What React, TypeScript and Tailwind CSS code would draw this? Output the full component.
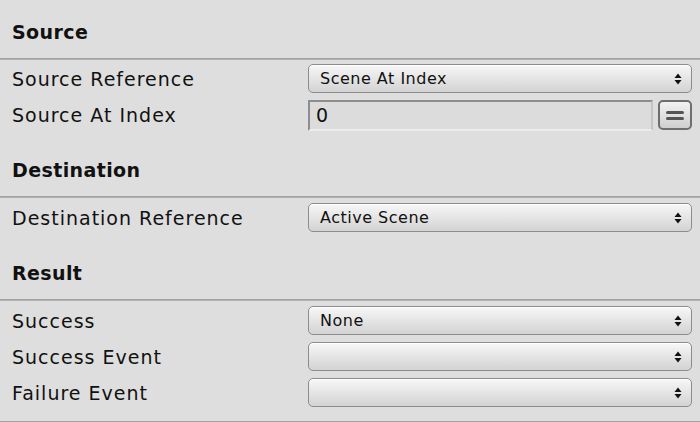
import React from "react";

const FONT = { fontFamily: '"Lucida Grande", "DejaVu Sans", sans-serif' };

function Arrows() {
  return (
    <svg width="8" height="12" viewBox="0 0 8 12" className="shrink-0">
      <path d="M4 0.5 L7.5 5 L0.5 5 Z" fill="#111" />
      <path d="M4 11.5 L7.5 7 L0.5 7 Z" fill="#111" />
    </svg>
  );
}

function Dropdown({ value }: { value?: string }) {
  return (
    <div className="flex h-[29px] flex-1 items-center justify-between rounded-[5px] border border-[#8c8c8c] bg-gradient-to-b from-[#f7f7f7] to-[#d3d3d3] pl-[11px] pr-[9px] text-[16px] tracking-[0.5px] text-[#111] shadow-[inset_0_1px_0_#ffffff]">
      <span>{value}</span>
      <Arrows />
    </div>
  );
}

function Header({ title }: { title: string }) {
  return (
    <>
      <div className="flex h-[58px] items-center px-[12px] pt-[6px] text-[19px] font-bold tracking-[0.4px] text-[#111]">
        {title}
      </div>
      <div className="h-[2px] bg-[#b0b0b0] border-t border-[#a2a2a2]" />
    </>
  );
}

function Row({ label, children }: { label: string; children: React.ReactNode }) {
  return (
    <div className="flex h-[36px] items-start">
      <div className="flex h-[30px] w-[308px] shrink-0 items-center pl-[12px] text-[19px] tracking-[1px] text-[#111]">
        {label}
      </div>
      <div className="flex flex-1 gap-[5px] pr-[8px]">{children}</div>
    </div>
  );
}

export default function App() {
  return (
    <div className="h-[422px] w-[700px] overflow-hidden bg-[#dedede]" style={FONT}>
      <Header title="Source" />
      <div className="pt-[4px] pb-[2px]">
        <Row label="Source Reference">
          <Dropdown value="Scene At Index" />
        </Row>
        <Row label="Source At Index">
          <div className="flex h-[31px] flex-1 items-center border-2 border-[#8e8e8e] border-b-[#ececec] border-r-[#c4c4c4] bg-[#dcdcdc] pl-[6px] text-[19px] text-[#111]">
            0
          </div>
          <div className="flex h-[30px] w-[34px] flex-col items-center justify-center gap-[3px] rounded-[5px] border-2 border-[#6e6e6e] bg-gradient-to-b from-[#f2f2f2] to-[#cfcfcf]">
            <div className="h-[3px] w-[18px] rounded-full bg-[#555]" />
            <div className="h-[3px] w-[18px] rounded-full bg-[#555]" />
          </div>
        </Row>
      </div>
      <Header title="Destination" />
      <div className="pt-[5px] pb-[2px]">
        <Row label="Destination Reference">
          <Dropdown value="Active Scene" />
        </Row>
      </div>
      <Header title="Result" />
      <div className="pt-[5px] pb-[2px]">
        <Row label="Success">
          <Dropdown value="None" />
        </Row>
        <Row label="Success Event">
          <Dropdown />
        </Row>
        <Row label="Failure Event">
          <Dropdown />
        </Row>
      </div>
      <div className="mt-[5px] h-[2px] bg-[#b0b0b0] border-t border-[#a2a2a2]" />
    </div>
  );
}
